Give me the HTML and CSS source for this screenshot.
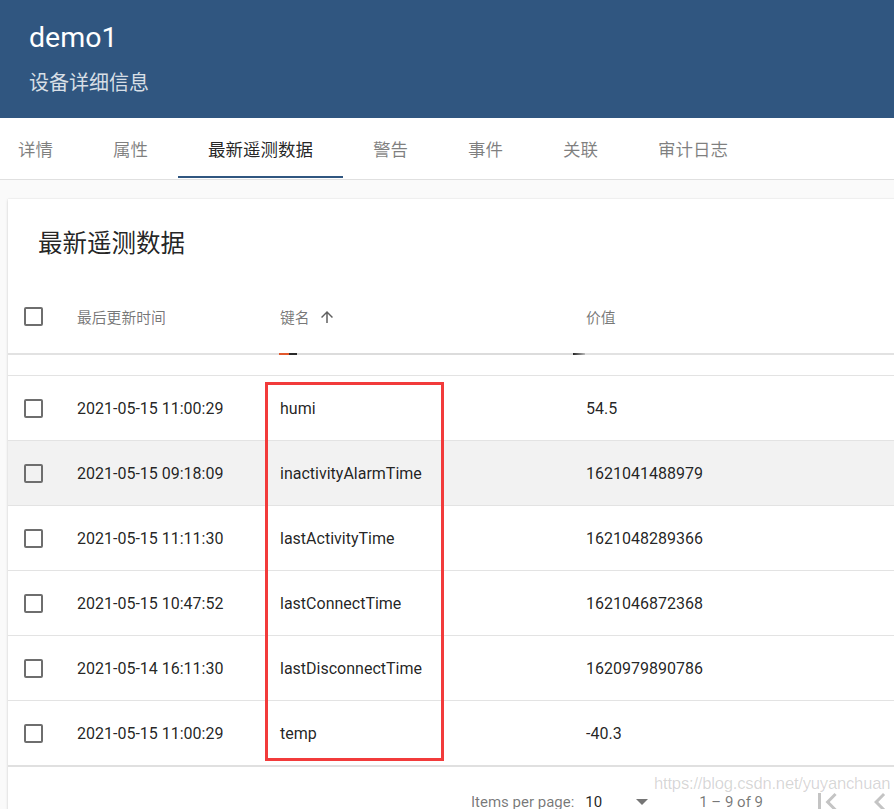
FILE: index.html
```html
<!DOCTYPE html>
<html lang="zh">
<head>
<meta charset="utf-8">
<title>demo1</title>
<link rel="stylesheet" href="styles.css">
</head>
<body>
<header class="hdr">
  <div class="hdr-title">demo1</div>
  <div class="hdr-sub">设备详细信息</div>
</header>
<nav class="tabs">
  <div class="tab">详情</div>
  <div class="tab">属性</div>
  <div class="tab active">最新遥测数据</div>
  <div class="tab">警告</div>
  <div class="tab">事件</div>
  <div class="tab">关联</div>
  <div class="tab">审计日志</div>
</nav>
<main class="card">
  <div class="card-title">最新遥测数据</div>
  <div class="row head">
    <div class="c-check"><span class="box"></span></div>
    <div class="c-date">最后更新时间</div>
    <div class="c-key">键名
      <svg class="sort" viewBox="0 0 24 24" width="18" height="18"><path d="M4 12l1.41 1.41L11 7.83V20h2V7.83l5.58 5.59L20 12l-8-8-8 8z" fill="#606060"/></svg>
    </div>
    <div class="c-val">价值</div>
  </div>
  <div class="bar">
    <span class="seg s-rest1"></span><span class="seg s-or"></span><span class="seg s-bk"></span><span class="seg s-gr"></span><span class="seg s-fade"></span><span class="seg s-rest2"></span>
  </div>
  <div class="spacer"></div>
  <div class="rows">
    <div class="row"><div class="c-check"><span class="box"></span></div><div class="c-date">2021-05-15 11:00:29</div><div class="c-key">humi</div><div class="c-val">54.5</div></div>
    <div class="row hl"><div class="c-check"><span class="box"></span></div><div class="c-date">2021-05-15 09:18:09</div><div class="c-key">inactivityAlarmTime</div><div class="c-val">1621041488979</div></div>
    <div class="row"><div class="c-check"><span class="box"></span></div><div class="c-date">2021-05-15 11:11:30</div><div class="c-key">lastActivityTime</div><div class="c-val">1621048289366</div></div>
    <div class="row"><div class="c-check"><span class="box"></span></div><div class="c-date">2021-05-15 10:47:52</div><div class="c-key">lastConnectTime</div><div class="c-val">1621046872368</div></div>
    <div class="row"><div class="c-check"><span class="box"></span></div><div class="c-date">2021-05-14 16:11:30</div><div class="c-key">lastDisconnectTime</div><div class="c-val">1620979890786</div></div>
    <div class="row last"><div class="c-check"><span class="box"></span></div><div class="c-date">2021-05-15 11:00:29</div><div class="c-key">temp</div><div class="c-val">-40.3</div></div>
    <div class="redbox"></div>
  </div>
  <div class="footer">
    <span class="ipp">Items per page:</span>
    <span class="sel">10</span>
    <span class="tri"></span>
    <span class="range">1 – 9 of 9</span>
    <svg class="ico first" viewBox="0 0 24 24" width="36" height="36"><path d="M18.41 16.59L13.82 12l4.59-4.59L17 6l-6 6 6 6zM6 6h2v12H6z" fill="#c4c4c4"/></svg>
    <svg class="ico prev" viewBox="0 0 24 24" width="36" height="36"><path d="M15.41 7.41L14 6l-6 6 6 6 1.41-1.41L10.83 12z" fill="#c4c4c4"/></svg>
  </div>
</main>
<div class="wm">https://blog.csdn.net/yuyanchuan</div>
</body>
</html>
```
FILE: styles.css
```css
html, body {
  margin: 0;
  padding: 0;
  overflow: hidden;
  width: 894px;
  height: 809px;
}
body {
  background: #fafafa;
  font-family: Roboto, "Noto Sans CJK SC", sans-serif;
  color: rgba(0,0,0,0.87);
  position: relative;
}
.hdr {
  background: #305680;
  height: 118px;
  box-sizing: border-box;
  padding: 22px 0 0 29px;
  color: #fff;
}
.hdr-title {
  font-size: 28.5px;
  line-height: 32px;
}
.hdr-sub {
  margin-top: 15px;
  font-size: 20px;
  line-height: 28px;
  color: rgba(255,255,255,0.82);
}
.tabs {
  display: flex;
  height: 61px;
  background: #fff;
  border-bottom: 1px solid #e0e0e0;
  margin-left: -12px;
  width: 920px;
}
.tab {
  position: relative;
  padding: 3px 30px 0;
  font-size: 17.5px;
  line-height: 58px;
  color: rgba(0,0,0,0.5);
  white-space: nowrap;
}
.tab.active {
  color: rgba(0,0,0,0.87);
}
.tab.active::after {
  content: "";
  position: absolute;
  left: 0;
  right: 0;
  bottom: 1px;
  height: 2px;
  background: #305680;
}
.card {
  position: relative;
  margin: 19px 0 0 8px;
  width: 1000px;
  background: #fff;
  box-shadow: 0 1px 3px rgba(0,0,0,0.14), 0 0 1px rgba(0,0,0,0.12);
}
.card-title {
  height: 84px;
  display: flex;
  align-items: center;
  padding-left: 30px;
  font-size: 24.5px;
  color: rgba(0,0,0,0.87);
}
.row {
  display: flex;
  align-items: center;
  height: 64px;
  padding-left: 16px;
  border-bottom: 1px solid #e3e3e3;
  font-size: 16px;
}
.row.hl { background: #f2f2f2; }
.row.last { border-bottom: 2px solid #e0e0e0; }
.row.head {
  height: 70px;
  padding-bottom: 3px;
  box-sizing: border-box;
  border-bottom: none;
  font-size: 14.8px;
  color: rgba(0,0,0,0.54);
}
.c-check { width: 53px; display: flex; align-items: center; }
.c-date { width: 203px; }
.c-key { width: 306px; display: flex; align-items: center; }
.c-val { flex: 1; }
.box {
  display: block;
  width: 15px;
  height: 15px;
  border: 2px solid #6e6e6e;
  border-radius: 2px;
}
.sort { margin-left: 8px; }
.bar {
  display: flex;
  height: 2px;
}
.seg { display: block; height: 2px; }
.s-rest1 { width: 271px; background: #e2e2e2; }
.s-or { width: 10px; background: #e2582c; }
.s-bk { width: 8px; background: #2a2a2a; }
.s-gr { width: 276px; background: #dcdcdc; }
.s-fade { width: 12px; background: linear-gradient(to right, #222, #bbb); }
.s-rest2 { flex: 1; background: #e2e2e2; }
.spacer {
  height: 20px;
  border-bottom: 1px solid #e3e3e3;
}
.rows { position: relative; }
.redbox {
  position: absolute;
  left: 257px;
  top: 6px;
  width: 173px;
  height: 373px;
  border: 3px solid #f23b3b;
}
.footer {
  display: flex;
  align-items: center;
  height: 70px;
  padding-left: 463px;
  font-size: 15px;
  color: rgba(0,0,0,0.54);
}
.sel { margin-left: 11px; color: rgba(0,0,0,0.87); }
.tri {
  margin-left: 34px;
  width: 0;
  height: 0;
  border-left: 6px solid transparent;
  border-right: 6px solid transparent;
  border-top: 6px solid #757575;
}
.range { margin-left: 51px; }
.ico.first { margin-left: 46px; }
.ico.prev { margin-left: 17px; }
.wm {
  position: absolute;
  left: 654px;
  top: 774px;
  font-family: "Liberation Sans", sans-serif;
  font-size: 16.6px;
  color: rgba(0,0,0,0.17);
  letter-spacing: -0.2px;
  white-space: nowrap;
}
```
